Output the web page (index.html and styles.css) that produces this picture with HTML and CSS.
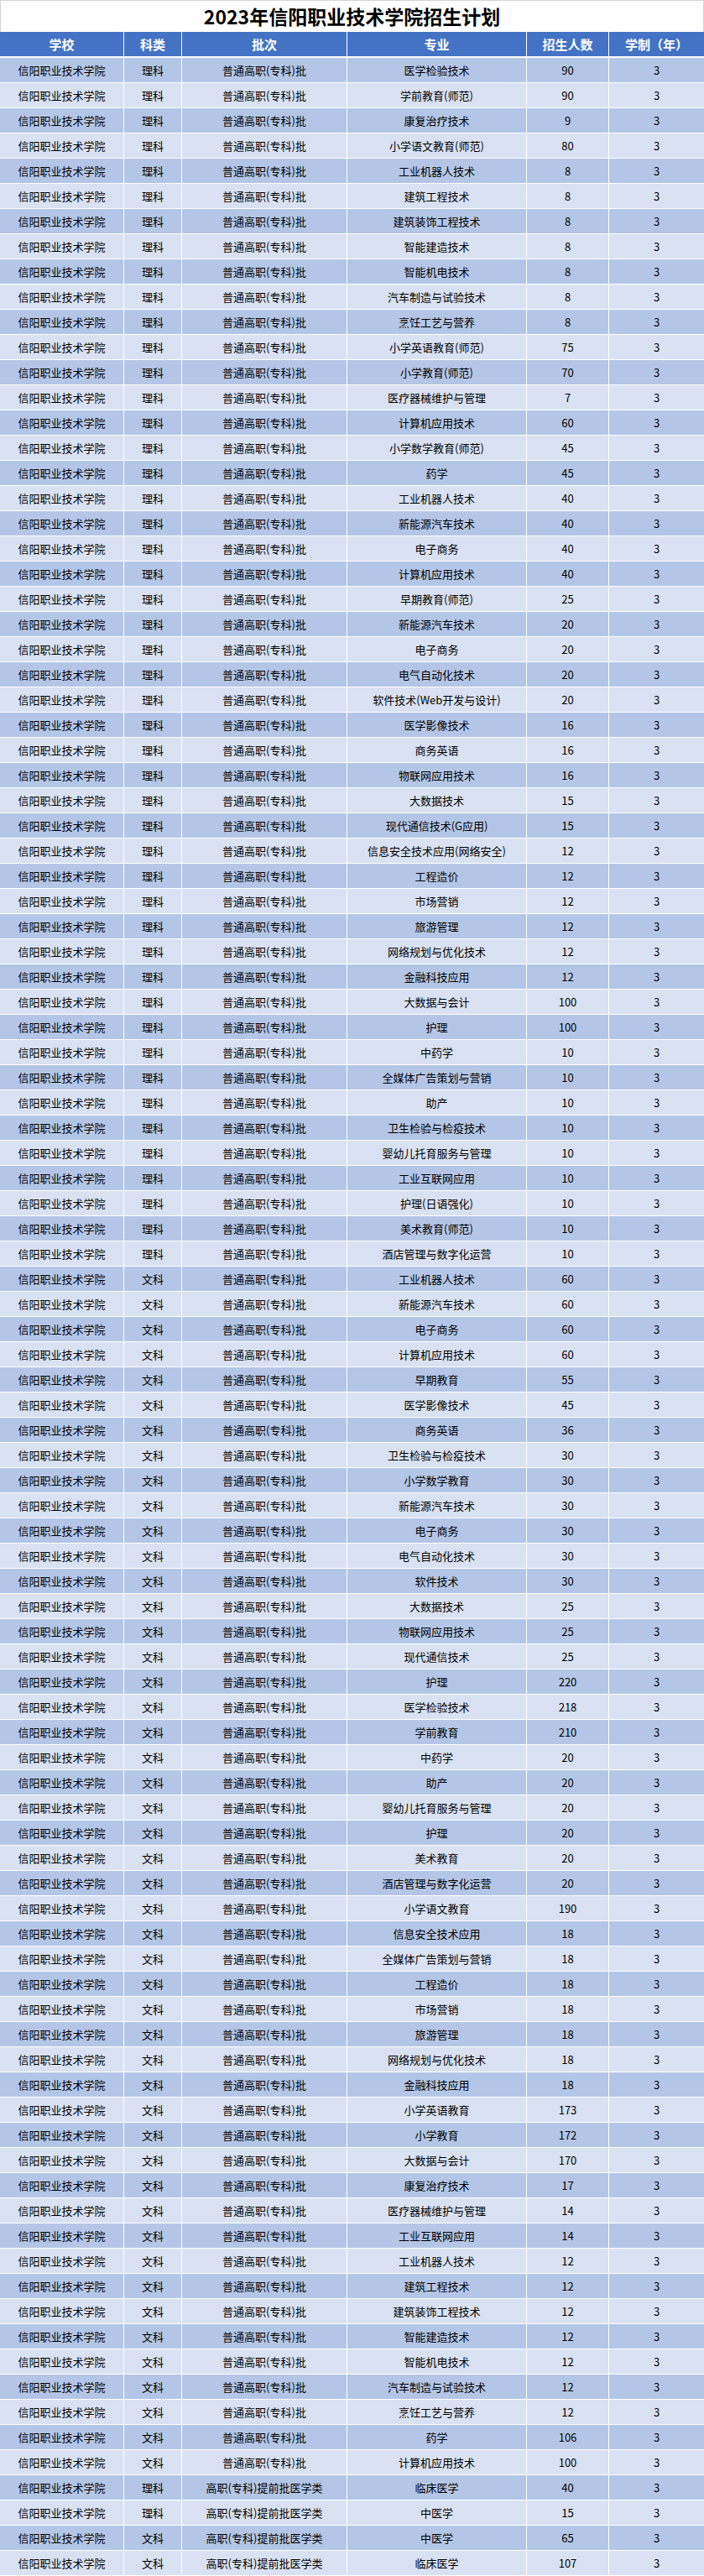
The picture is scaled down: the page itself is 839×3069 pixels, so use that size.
FILE: index.html
```html
<!DOCTYPE html>
<html lang="zh-CN">
<head>
<meta charset="utf-8">
<title>2023年信阳职业技术学院招生计划</title>
<link rel="stylesheet" href="styles.css">
</head>
<body>
<div class="sheet">
  <div class="title">2023年信阳职业技术学院招生计划</div>
  <div class="row head"><span>学校</span><span>科类</span><span>批次</span><span>专业</span><span>招生人数</span><span>学制（年）</span></div>
  <div class="data">
    <div class="row"><span>信阳职业技术学院</span><span>理科</span><span>普通高职(专科)批</span><span>医学检验技术</span><span>90</span><span>3</span></div>
    <div class="row"><span>信阳职业技术学院</span><span>理科</span><span>普通高职(专科)批</span><span>学前教育(师范)</span><span>90</span><span>3</span></div>
    <div class="row"><span>信阳职业技术学院</span><span>理科</span><span>普通高职(专科)批</span><span>康复治疗技术</span><span>9</span><span>3</span></div>
    <div class="row"><span>信阳职业技术学院</span><span>理科</span><span>普通高职(专科)批</span><span>小学语文教育(师范)</span><span>80</span><span>3</span></div>
    <div class="row"><span>信阳职业技术学院</span><span>理科</span><span>普通高职(专科)批</span><span>工业机器人技术</span><span>8</span><span>3</span></div>
    <div class="row"><span>信阳职业技术学院</span><span>理科</span><span>普通高职(专科)批</span><span>建筑工程技术</span><span>8</span><span>3</span></div>
    <div class="row"><span>信阳职业技术学院</span><span>理科</span><span>普通高职(专科)批</span><span>建筑装饰工程技术</span><span>8</span><span>3</span></div>
    <div class="row"><span>信阳职业技术学院</span><span>理科</span><span>普通高职(专科)批</span><span>智能建造技术</span><span>8</span><span>3</span></div>
    <div class="row"><span>信阳职业技术学院</span><span>理科</span><span>普通高职(专科)批</span><span>智能机电技术</span><span>8</span><span>3</span></div>
    <div class="row"><span>信阳职业技术学院</span><span>理科</span><span>普通高职(专科)批</span><span>汽车制造与试验技术</span><span>8</span><span>3</span></div>
    <div class="row"><span>信阳职业技术学院</span><span>理科</span><span>普通高职(专科)批</span><span>烹饪工艺与营养</span><span>8</span><span>3</span></div>
    <div class="row"><span>信阳职业技术学院</span><span>理科</span><span>普通高职(专科)批</span><span>小学英语教育(师范)</span><span>75</span><span>3</span></div>
    <div class="row"><span>信阳职业技术学院</span><span>理科</span><span>普通高职(专科)批</span><span>小学教育(师范)</span><span>70</span><span>3</span></div>
    <div class="row"><span>信阳职业技术学院</span><span>理科</span><span>普通高职(专科)批</span><span>医疗器械维护与管理</span><span>7</span><span>3</span></div>
    <div class="row"><span>信阳职业技术学院</span><span>理科</span><span>普通高职(专科)批</span><span>计算机应用技术</span><span>60</span><span>3</span></div>
    <div class="row"><span>信阳职业技术学院</span><span>理科</span><span>普通高职(专科)批</span><span>小学数学教育(师范)</span><span>45</span><span>3</span></div>
    <div class="row"><span>信阳职业技术学院</span><span>理科</span><span>普通高职(专科)批</span><span>药学</span><span>45</span><span>3</span></div>
    <div class="row"><span>信阳职业技术学院</span><span>理科</span><span>普通高职(专科)批</span><span>工业机器人技术</span><span>40</span><span>3</span></div>
    <div class="row"><span>信阳职业技术学院</span><span>理科</span><span>普通高职(专科)批</span><span>新能源汽车技术</span><span>40</span><span>3</span></div>
    <div class="row"><span>信阳职业技术学院</span><span>理科</span><span>普通高职(专科)批</span><span>电子商务</span><span>40</span><span>3</span></div>
    <div class="row"><span>信阳职业技术学院</span><span>理科</span><span>普通高职(专科)批</span><span>计算机应用技术</span><span>40</span><span>3</span></div>
    <div class="row"><span>信阳职业技术学院</span><span>理科</span><span>普通高职(专科)批</span><span>早期教育(师范)</span><span>25</span><span>3</span></div>
    <div class="row"><span>信阳职业技术学院</span><span>理科</span><span>普通高职(专科)批</span><span>新能源汽车技术</span><span>20</span><span>3</span></div>
    <div class="row"><span>信阳职业技术学院</span><span>理科</span><span>普通高职(专科)批</span><span>电子商务</span><span>20</span><span>3</span></div>
    <div class="row"><span>信阳职业技术学院</span><span>理科</span><span>普通高职(专科)批</span><span>电气自动化技术</span><span>20</span><span>3</span></div>
    <div class="row"><span>信阳职业技术学院</span><span>理科</span><span>普通高职(专科)批</span><span>软件技术(Web开发与设计)</span><span>20</span><span>3</span></div>
    <div class="row"><span>信阳职业技术学院</span><span>理科</span><span>普通高职(专科)批</span><span>医学影像技术</span><span>16</span><span>3</span></div>
    <div class="row"><span>信阳职业技术学院</span><span>理科</span><span>普通高职(专科)批</span><span>商务英语</span><span>16</span><span>3</span></div>
    <div class="row"><span>信阳职业技术学院</span><span>理科</span><span>普通高职(专科)批</span><span>物联网应用技术</span><span>16</span><span>3</span></div>
    <div class="row"><span>信阳职业技术学院</span><span>理科</span><span>普通高职(专科)批</span><span>大数据技术</span><span>15</span><span>3</span></div>
    <div class="row"><span>信阳职业技术学院</span><span>理科</span><span>普通高职(专科)批</span><span>现代通信技术(G应用)</span><span>15</span><span>3</span></div>
    <div class="row"><span>信阳职业技术学院</span><span>理科</span><span>普通高职(专科)批</span><span>信息安全技术应用(网络安全)</span><span>12</span><span>3</span></div>
    <div class="row"><span>信阳职业技术学院</span><span>理科</span><span>普通高职(专科)批</span><span>工程造价</span><span>12</span><span>3</span></div>
    <div class="row"><span>信阳职业技术学院</span><span>理科</span><span>普通高职(专科)批</span><span>市场营销</span><span>12</span><span>3</span></div>
    <div class="row"><span>信阳职业技术学院</span><span>理科</span><span>普通高职(专科)批</span><span>旅游管理</span><span>12</span><span>3</span></div>
    <div class="row"><span>信阳职业技术学院</span><span>理科</span><span>普通高职(专科)批</span><span>网络规划与优化技术</span><span>12</span><span>3</span></div>
    <div class="row"><span>信阳职业技术学院</span><span>理科</span><span>普通高职(专科)批</span><span>金融科技应用</span><span>12</span><span>3</span></div>
    <div class="row"><span>信阳职业技术学院</span><span>理科</span><span>普通高职(专科)批</span><span>大数据与会计</span><span>100</span><span>3</span></div>
    <div class="row"><span>信阳职业技术学院</span><span>理科</span><span>普通高职(专科)批</span><span>护理</span><span>100</span><span>3</span></div>
    <div class="row"><span>信阳职业技术学院</span><span>理科</span><span>普通高职(专科)批</span><span>中药学</span><span>10</span><span>3</span></div>
    <div class="row"><span>信阳职业技术学院</span><span>理科</span><span>普通高职(专科)批</span><span>全媒体广告策划与营销</span><span>10</span><span>3</span></div>
    <div class="row"><span>信阳职业技术学院</span><span>理科</span><span>普通高职(专科)批</span><span>助产</span><span>10</span><span>3</span></div>
    <div class="row"><span>信阳职业技术学院</span><span>理科</span><span>普通高职(专科)批</span><span>卫生检验与检疫技术</span><span>10</span><span>3</span></div>
    <div class="row"><span>信阳职业技术学院</span><span>理科</span><span>普通高职(专科)批</span><span>婴幼儿托育服务与管理</span><span>10</span><span>3</span></div>
    <div class="row"><span>信阳职业技术学院</span><span>理科</span><span>普通高职(专科)批</span><span>工业互联网应用</span><span>10</span><span>3</span></div>
    <div class="row"><span>信阳职业技术学院</span><span>理科</span><span>普通高职(专科)批</span><span>护理(日语强化)</span><span>10</span><span>3</span></div>
    <div class="row"><span>信阳职业技术学院</span><span>理科</span><span>普通高职(专科)批</span><span>美术教育(师范)</span><span>10</span><span>3</span></div>
    <div class="row"><span>信阳职业技术学院</span><span>理科</span><span>普通高职(专科)批</span><span>酒店管理与数字化运营</span><span>10</span><span>3</span></div>
    <div class="row"><span>信阳职业技术学院</span><span>文科</span><span>普通高职(专科)批</span><span>工业机器人技术</span><span>60</span><span>3</span></div>
    <div class="row"><span>信阳职业技术学院</span><span>文科</span><span>普通高职(专科)批</span><span>新能源汽车技术</span><span>60</span><span>3</span></div>
    <div class="row"><span>信阳职业技术学院</span><span>文科</span><span>普通高职(专科)批</span><span>电子商务</span><span>60</span><span>3</span></div>
    <div class="row"><span>信阳职业技术学院</span><span>文科</span><span>普通高职(专科)批</span><span>计算机应用技术</span><span>60</span><span>3</span></div>
    <div class="row"><span>信阳职业技术学院</span><span>文科</span><span>普通高职(专科)批</span><span>早期教育</span><span>55</span><span>3</span></div>
    <div class="row"><span>信阳职业技术学院</span><span>文科</span><span>普通高职(专科)批</span><span>医学影像技术</span><span>45</span><span>3</span></div>
    <div class="row"><span>信阳职业技术学院</span><span>文科</span><span>普通高职(专科)批</span><span>商务英语</span><span>36</span><span>3</span></div>
    <div class="row"><span>信阳职业技术学院</span><span>文科</span><span>普通高职(专科)批</span><span>卫生检验与检疫技术</span><span>30</span><span>3</span></div>
    <div class="row"><span>信阳职业技术学院</span><span>文科</span><span>普通高职(专科)批</span><span>小学数学教育</span><span>30</span><span>3</span></div>
    <div class="row"><span>信阳职业技术学院</span><span>文科</span><span>普通高职(专科)批</span><span>新能源汽车技术</span><span>30</span><span>3</span></div>
    <div class="row"><span>信阳职业技术学院</span><span>文科</span><span>普通高职(专科)批</span><span>电子商务</span><span>30</span><span>3</span></div>
    <div class="row"><span>信阳职业技术学院</span><span>文科</span><span>普通高职(专科)批</span><span>电气自动化技术</span><span>30</span><span>3</span></div>
    <div class="row"><span>信阳职业技术学院</span><span>文科</span><span>普通高职(专科)批</span><span>软件技术</span><span>30</span><span>3</span></div>
    <div class="row"><span>信阳职业技术学院</span><span>文科</span><span>普通高职(专科)批</span><span>大数据技术</span><span>25</span><span>3</span></div>
    <div class="row"><span>信阳职业技术学院</span><span>文科</span><span>普通高职(专科)批</span><span>物联网应用技术</span><span>25</span><span>3</span></div>
    <div class="row"><span>信阳职业技术学院</span><span>文科</span><span>普通高职(专科)批</span><span>现代通信技术</span><span>25</span><span>3</span></div>
    <div class="row"><span>信阳职业技术学院</span><span>文科</span><span>普通高职(专科)批</span><span>护理</span><span>220</span><span>3</span></div>
    <div class="row"><span>信阳职业技术学院</span><span>文科</span><span>普通高职(专科)批</span><span>医学检验技术</span><span>218</span><span>3</span></div>
    <div class="row"><span>信阳职业技术学院</span><span>文科</span><span>普通高职(专科)批</span><span>学前教育</span><span>210</span><span>3</span></div>
    <div class="row"><span>信阳职业技术学院</span><span>文科</span><span>普通高职(专科)批</span><span>中药学</span><span>20</span><span>3</span></div>
    <div class="row"><span>信阳职业技术学院</span><span>文科</span><span>普通高职(专科)批</span><span>助产</span><span>20</span><span>3</span></div>
    <div class="row"><span>信阳职业技术学院</span><span>文科</span><span>普通高职(专科)批</span><span>婴幼儿托育服务与管理</span><span>20</span><span>3</span></div>
    <div class="row"><span>信阳职业技术学院</span><span>文科</span><span>普通高职(专科)批</span><span>护理</span><span>20</span><span>3</span></div>
    <div class="row"><span>信阳职业技术学院</span><span>文科</span><span>普通高职(专科)批</span><span>美术教育</span><span>20</span><span>3</span></div>
    <div class="row"><span>信阳职业技术学院</span><span>文科</span><span>普通高职(专科)批</span><span>酒店管理与数字化运营</span><span>20</span><span>3</span></div>
    <div class="row"><span>信阳职业技术学院</span><span>文科</span><span>普通高职(专科)批</span><span>小学语文教育</span><span>190</span><span>3</span></div>
    <div class="row"><span>信阳职业技术学院</span><span>文科</span><span>普通高职(专科)批</span><span>信息安全技术应用</span><span>18</span><span>3</span></div>
    <div class="row"><span>信阳职业技术学院</span><span>文科</span><span>普通高职(专科)批</span><span>全媒体广告策划与营销</span><span>18</span><span>3</span></div>
    <div class="row"><span>信阳职业技术学院</span><span>文科</span><span>普通高职(专科)批</span><span>工程造价</span><span>18</span><span>3</span></div>
    <div class="row"><span>信阳职业技术学院</span><span>文科</span><span>普通高职(专科)批</span><span>市场营销</span><span>18</span><span>3</span></div>
    <div class="row"><span>信阳职业技术学院</span><span>文科</span><span>普通高职(专科)批</span><span>旅游管理</span><span>18</span><span>3</span></div>
    <div class="row"><span>信阳职业技术学院</span><span>文科</span><span>普通高职(专科)批</span><span>网络规划与优化技术</span><span>18</span><span>3</span></div>
    <div class="row"><span>信阳职业技术学院</span><span>文科</span><span>普通高职(专科)批</span><span>金融科技应用</span><span>18</span><span>3</span></div>
    <div class="row"><span>信阳职业技术学院</span><span>文科</span><span>普通高职(专科)批</span><span>小学英语教育</span><span>173</span><span>3</span></div>
    <div class="row"><span>信阳职业技术学院</span><span>文科</span><span>普通高职(专科)批</span><span>小学教育</span><span>172</span><span>3</span></div>
    <div class="row"><span>信阳职业技术学院</span><span>文科</span><span>普通高职(专科)批</span><span>大数据与会计</span><span>170</span><span>3</span></div>
    <div class="row"><span>信阳职业技术学院</span><span>文科</span><span>普通高职(专科)批</span><span>康复治疗技术</span><span>17</span><span>3</span></div>
    <div class="row"><span>信阳职业技术学院</span><span>文科</span><span>普通高职(专科)批</span><span>医疗器械维护与管理</span><span>14</span><span>3</span></div>
    <div class="row"><span>信阳职业技术学院</span><span>文科</span><span>普通高职(专科)批</span><span>工业互联网应用</span><span>14</span><span>3</span></div>
    <div class="row"><span>信阳职业技术学院</span><span>文科</span><span>普通高职(专科)批</span><span>工业机器人技术</span><span>12</span><span>3</span></div>
    <div class="row"><span>信阳职业技术学院</span><span>文科</span><span>普通高职(专科)批</span><span>建筑工程技术</span><span>12</span><span>3</span></div>
    <div class="row"><span>信阳职业技术学院</span><span>文科</span><span>普通高职(专科)批</span><span>建筑装饰工程技术</span><span>12</span><span>3</span></div>
    <div class="row"><span>信阳职业技术学院</span><span>文科</span><span>普通高职(专科)批</span><span>智能建造技术</span><span>12</span><span>3</span></div>
    <div class="row"><span>信阳职业技术学院</span><span>文科</span><span>普通高职(专科)批</span><span>智能机电技术</span><span>12</span><span>3</span></div>
    <div class="row"><span>信阳职业技术学院</span><span>文科</span><span>普通高职(专科)批</span><span>汽车制造与试验技术</span><span>12</span><span>3</span></div>
    <div class="row"><span>信阳职业技术学院</span><span>文科</span><span>普通高职(专科)批</span><span>烹饪工艺与营养</span><span>12</span><span>3</span></div>
    <div class="row"><span>信阳职业技术学院</span><span>文科</span><span>普通高职(专科)批</span><span>药学</span><span>106</span><span>3</span></div>
    <div class="row"><span>信阳职业技术学院</span><span>文科</span><span>普通高职(专科)批</span><span>计算机应用技术</span><span>100</span><span>3</span></div>
    <div class="row"><span>信阳职业技术学院</span><span>理科</span><span>高职(专科)提前批医学类</span><span>临床医学</span><span>40</span><span>3</span></div>
    <div class="row"><span>信阳职业技术学院</span><span>理科</span><span>高职(专科)提前批医学类</span><span>中医学</span><span>15</span><span>3</span></div>
    <div class="row"><span>信阳职业技术学院</span><span>文科</span><span>高职(专科)提前批医学类</span><span>中医学</span><span>65</span><span>3</span></div>
    <div class="row"><span>信阳职业技术学院</span><span>文科</span><span>高职(专科)提前批医学类</span><span>临床医学</span><span>107</span><span>3</span></div>
  </div>
</div>
</body>
</html>
```
FILE: styles.css
```css
html, body {
  margin: 0;
  padding: 0;
  background: #ffffff;
}

body {
  font-family: "Noto Sans CJK SC", "Noto Sans", sans-serif;
  color: #000000;
}

.sheet {
  width: 839px;
}

.title {
  box-sizing: border-box;
  height: 38px;
  border-top: 1px solid #d4d4d4;
  border-left: 1px solid #d4d4d4;
  border-right: 1px solid #d4d4d4;
  display: flex;
  align-items: center;
  justify-content: center;
  font-size: 23px;
  font-weight: 700;
  line-height: 1;
  color: #000000;
}

.row {
  display: grid;
  grid-template-columns: 147px 68px 196px 213px 97px 113px;
  column-gap: 1px;
  height: 29px;
  margin-bottom: 1px;
  background: #ffffff;
}

.row > span {
  display: flex;
  align-items: center;
  justify-content: center;
  white-space: nowrap;
  line-height: 1;
  font-size: 13px;
}

.head {
  margin-bottom: 2px;
}

.head > span {
  background: #4472c4;
  color: #ffffff;
  font-weight: 700;
  font-size: 15px;
}

.data .row:nth-child(odd) > span {
  background: #b4c6e7;
}

.data .row:nth-child(even) > span {
  background: #d9e1f2;
}
```
